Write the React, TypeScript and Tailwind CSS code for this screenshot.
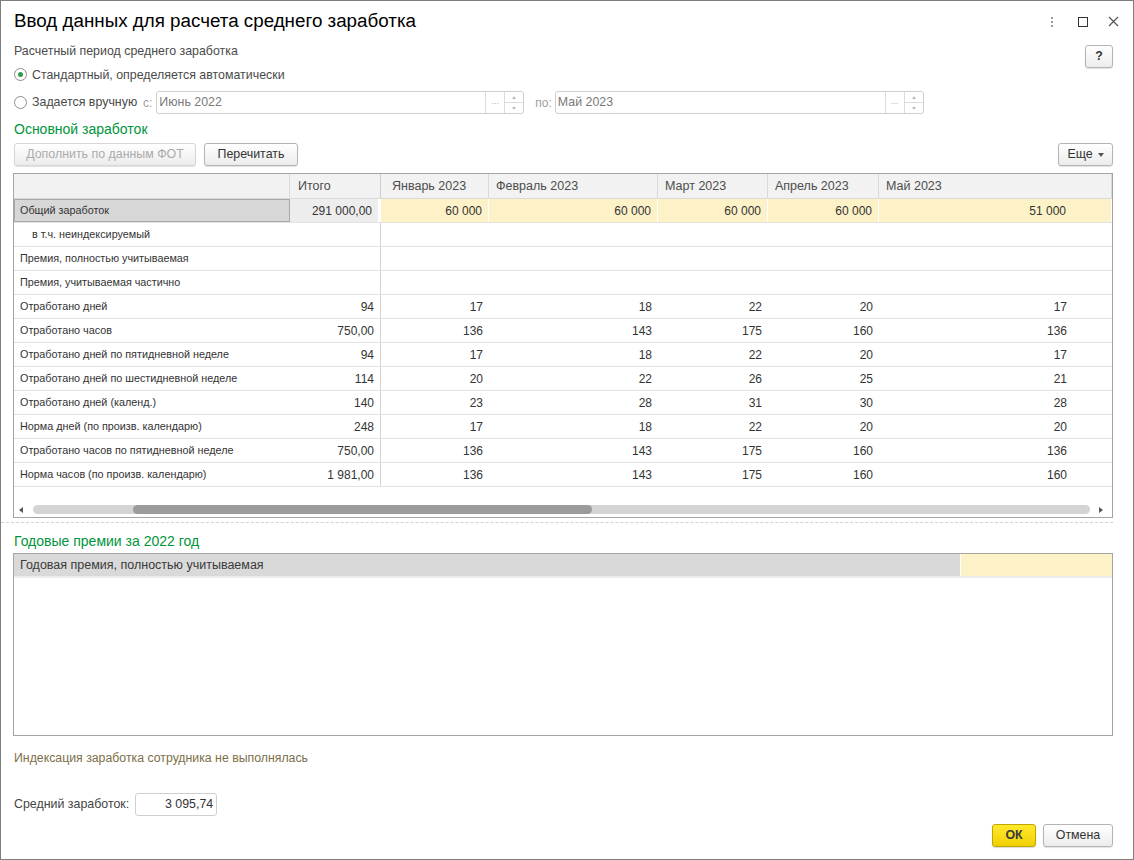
import type { ReactNode } from "react";

type Row = { label: string; total?: string; vals?: string[]; indent?: boolean };

const months = ["Январь 2023", "Февраль 2023", "Март 2023", "Апрель 2023", "Май 2023"];

// widths written out in full so tailwind picks them up
const monthHead = [
  "w-[108px] pl-[8px] border-l-[3px] border-l-[#f2f2f2]",
  "w-[169px] pl-[7px]",
  "w-[110px] pl-[7px]",
  "w-[111px] pl-[7px]",
  "flex-1 pl-[7px]",
];
const monthCell = [
  "w-[108px] pr-[6px]",
  "w-[169px] pr-[6px]",
  "w-[110px] pr-[6px]",
  "w-[111px] pr-[6px]",
  "flex-1 pr-[45px]",
];

const rows: Row[] = [
  { label: "в т.ч. неиндексируемый", indent: true },
  { label: "Премия, полностью учитываемая" },
  { label: "Премия, учитываемая частично" },
  { label: "Отработано дней", total: "94", vals: ["17", "18", "22", "20", "17"] },
  { label: "Отработано часов", total: "750,00", vals: ["136", "143", "175", "160", "136"] },
  { label: "Отработано дней по пятидневной неделе", total: "94", vals: ["17", "18", "22", "20", "17"] },
  { label: "Отработано дней по шестидневной неделе", total: "114", vals: ["20", "22", "26", "25", "21"] },
  { label: "Отработано дней (календ.)", total: "140", vals: ["23", "28", "31", "30", "28"] },
  { label: "Норма дней (по произв. календарю)", total: "248", vals: ["17", "18", "22", "20", "20"] },
  { label: "Отработано часов по пятидневной неделе", total: "750,00", vals: ["136", "143", "175", "160", "136"] },
  { label: "Норма часов (по произв. календарю)", total: "1 981,00", vals: ["136", "143", "175", "160", "160"] },
];

const font = "font-['Liberation_Sans',Arial,sans-serif]";

function Button({
  children,
  className = "",
  disabled,
}: {
  children: ReactNode;
  className?: string;
  disabled?: boolean;
}) {
  return (
    <div
      className={`flex h-[23px] items-center justify-center rounded-[3px] border bg-gradient-to-b from-white to-[#ececec] text-[12.4px] shadow-[0_1px_1px_rgba(0,0,0,0.12)] ${
        disabled ? "border-[#d6d6d6] text-[#ababab]" : "border-[#b4b4b4] text-[#333]"
      } ${className}`}
    >
      {children}
    </div>
  );
}

function Radio({ checked, label }: { checked?: boolean; label: string }) {
  return (
    <div className="flex items-center gap-[5px]">
      <div className="flex h-[13px] w-[13px] items-center justify-center rounded-full border border-[#8d8d8d] bg-white">
        {checked && <div className="h-[5px] w-[5px] rounded-full bg-[#2e9b47]" />}
      </div>
      <span className="text-[12.4px] text-[#4a4a4a]">{label}</span>
    </div>
  );
}

function PeriodInput({ value, className }: { value: string; className: string }) {
  return (
    <div className={`flex h-[23px] rounded-[3px] border border-[#cfcfcf] bg-white ${className}`}>
      <div className="flex flex-1 items-center pl-[2px] text-[12.4px] text-[#7a7a7a]">{value}</div>
      <div className="flex w-[19px] items-center justify-center border-l border-[#dcdcdc] pb-[2px] text-[9px] text-[#b0b0b0]">
        ...
      </div>
      <div className="flex w-[19px] flex-col border-l border-[#dcdcdc]">
        <div className="flex flex-1 items-center justify-center border-b border-[#dcdcdc]">
          <div className="h-0 w-0 border-x-[2px] border-b-[3px] border-x-transparent border-b-[#bdbdbd]" />
        </div>
        <div className="flex flex-1 items-center justify-center">
          <div className="h-0 w-0 border-x-[2px] border-t-[3px] border-x-transparent border-t-[#bdbdbd]" />
        </div>
      </div>
    </div>
  );
}

function MainTable() {
  return (
    <div className="mt-[7px] flex h-[345px] flex-col border border-[#a4a4a4] bg-white">
      {/* header */}
      <div className="flex h-[25px] border-b border-[#d9d9d9] bg-[#f2f2f2] text-[12.5px] text-[#4d4d4d]">
        <div className="w-[276px] border-r border-[#d9d9d9]" />
        <div className="flex w-[91px] items-center border-r border-[#cfcfcf] pl-[8px]">Итого</div>
        {months.map((m, i) => (
          <div
            key={m}
            className={`flex items-center border-r border-[#d9d9d9] ${monthHead[i]}`}
          >
            {m}
          </div>
        ))}
      </div>

      {/* first row, selected */}
      <div className="flex h-[24px] border-b border-[#e3e3e3] text-[12px] text-[#333]">
        <div className="flex w-[276px] items-center border border-[#a9a9a9] bg-[#d7d7d7] pl-[5px] text-[10.8px]">
          Общий заработок
        </div>
        <div className="flex w-[91px] items-center justify-end border-r-[3px] border-white bg-[#ededed] pr-[6px]">
          291 000,00
        </div>
        {["60 000", "60 000", "60 000", "60 000", "51 000"].map((v, i) => (
          <div
            key={i}
            className={`flex items-center justify-end border-r border-white bg-[#fdf2c7] ${monthCell[i]}`}
          >
            {v}
          </div>
        ))}
      </div>

      {rows.map((r) => (
        <div key={r.label} className="flex h-[24px] border-b border-[#e3e3e3] text-[12px] text-[#333]">
          <div
            className={`flex w-[276px] items-center text-[10.8px] ${
              r.indent ? "pl-[18px]" : "pl-[6px]"
            }`}
          >
            {r.label}
          </div>
          <div className="flex w-[91px] items-center justify-end border-r border-[#d3d3d3] pr-[6px]">
            {r.total}
          </div>
          {r.vals
            ? r.vals.map((v, i) => (
                <div key={i} className={`flex items-center justify-end ${monthCell[i]}`}>
                  {v}
                </div>
              ))
            : <div className="flex-1" />}
        </div>
      ))}

      {/* scrollbar */}
      <div className="mt-auto mb-[3px] flex h-[9px] items-center pl-[5px]">
        <div className="h-0 w-0 border-y-[3px] border-r-[4px] border-y-transparent border-r-[#555]" />
        <div className="ml-[10px] flex h-[9px] w-[1057px] rounded-full bg-[#d4d4d4]">
          <div className="ml-[100px] h-[9px] w-[459px] rounded-full bg-[#9b9b9b]" />
        </div>
        <div className="ml-[9px] h-0 w-0 border-y-[3px] border-l-[4px] border-y-transparent border-l-[#555]" />
      </div>
    </div>
  );
}

function BonusTable() {
  return (
    <div className="flex h-[183px] flex-col border border-[#a4a4a4] bg-white">
      <div className="flex h-[24px] border-b-[2px] border-[#ececec]">
        <div className="flex w-[947px] items-center border-r border-white bg-[#d9d9d9] pl-[6px] text-[12.5px] text-[#3a3a3a]">
          Годовая премия, полностью учитываемая
        </div>
        <div className="flex-1 bg-[#fdf2c7]" />
      </div>
    </div>
  );
}

export default function App() {
  return (
    <div className={`h-[860px] w-[1134px] overflow-hidden bg-white ${font}`}>
      <div className="flex h-full w-full flex-col border border-[#7e7e7e] pl-[12px] pr-[20px]">
        {/* title bar */}
        <div className="flex h-[41px] shrink-0 items-center">
          <div className="flex-1 pl-px text-[18.8px] text-black">Ввод данных для расчета среднего заработка</div>
          <div className="mr-[25px] flex flex-col gap-[2px]">
            <div className="h-[2px] w-[2px] rounded-full bg-[#777]" />
            <div className="h-[2px] w-[2px] rounded-full bg-[#777]" />
            <div className="h-[2px] w-[2px] rounded-full bg-[#777]" />
          </div>
          <div className="mr-[20px] h-[10px] w-[10px] border-[1.5px] border-[#333]" />
          <svg width="11" height="11" viewBox="0 0 11 11" className="-mr-[6px]">
            <path d="M1 1L10 10M10 1L1 10" stroke="#555" strokeWidth="1.2" />
          </svg>
        </div>

        {/* period block */}
        <div className="flex shrink-0">
          <div className="flex flex-1 flex-col pl-[1px]">
            <div className="flex h-[19px] items-center text-[12.4px] text-[#4a4a4a]">
              Расчетный период среднего заработка
            </div>
            <div className="flex h-[28px] items-center">
              <Radio checked label="Стандартный, определяется автоматически" />
            </div>
            <div className="flex h-[27px] items-center">
              <div className="w-[129px]">
                <Radio label="Задается вручную" />
              </div>
              <span className="text-[12px] text-[#a0a0a0]">с:</span>
              <PeriodInput value="Июнь 2022" className="ml-[4px] w-[368px]" />
              <span className="ml-[11px] text-[12px] text-[#a0a0a0]">по:</span>
              <PeriodInput value="Май 2023" className="ml-[3px] w-[369px]" />
            </div>
          </div>
          <Button className="mt-[3px] w-[28px] font-bold">?</Button>
        </div>

        <div className="flex h-[27px] shrink-0 items-center pl-[1px] text-[14px] text-[#00953b]">
          Основной заработок
        </div>

        <div className="flex shrink-0 items-center pl-[1px]">
          <Button disabled className="w-[182px]">Дополнить по данным ФОТ</Button>
          <Button className="ml-[8px] w-[94px]">Перечитать</Button>
          <Button className="ml-auto w-[55px] gap-[5px]">
            Еще
            <div className="h-0 w-0 border-x-[3px] border-t-[4px] border-x-transparent border-t-[#555]" />
          </Button>
        </div>

        <MainTable />

        <div className="-ml-[12px] mt-[4px] shrink-0 border-t border-dashed border-[#d2d2d2]" />

        <div className="flex h-[30px] shrink-0 items-center pl-[1px] pt-[6px] text-[14px] text-[#00953b]">
          Годовые премии за 2022 год
        </div>

        <BonusTable />

        <div className="flex h-[44px] shrink-0 items-center pl-[1px] text-[12.3px] text-[#7c6f48]">
          Индексация заработка сотрудника не выполнялась
        </div>

        <div className="mt-[13px] flex h-[23px] shrink-0 items-center pl-[1px]">
          <span className="text-[12.4px] text-[#444]">Средний заработок:</span>
          <div className="ml-[6px] flex h-[23px] w-[82px] items-center justify-end rounded-[3px] border border-[#cfcfcf] pr-[3px] text-[12.4px] text-[#333]">
            3 095,74
          </div>
        </div>

        <div className="mt-[8px] flex shrink-0 justify-end">
          <div className="flex h-[23px] w-[44px] items-center justify-center rounded-[3px] border border-[#c2a600] bg-gradient-to-b from-[#ffea2a] to-[#f0cf00] text-[12.4px] font-bold text-[#3a3a3a] shadow-[0_1px_1px_rgba(0,0,0,0.15)]">
            ОК
          </div>
          <Button className="ml-[7px] w-[70px]">Отмена</Button>
        </div>
      </div>
    </div>
  );
}
